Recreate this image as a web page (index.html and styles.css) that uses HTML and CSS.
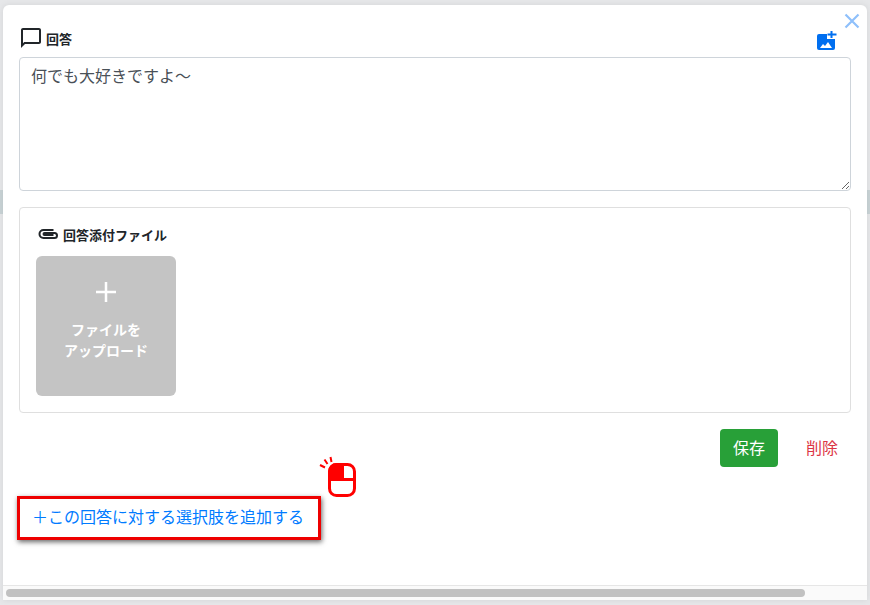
FILE: index.html
```html
<!DOCTYPE html>
<html lang="ja">
<head>
    <meta charset="UTF-8">
    <meta name="viewport" content="width=device-width, initial-scale=1.0">
    <title>回答</title>
    <link rel="stylesheet" href="styles.css">
</head>
<body>
    <div class="modal">
        <button type="button" class="close-button" aria-label="閉じる">
            <svg width="16" height="16" viewBox="0 0 16 16"><path d="M1.5 1.5l13 13M14.5 1.5l-13 13" fill="none" stroke="#8fc0fb" stroke-width="2.2"/></svg>
        </button>
        <div class="modal-body">
            <div class="answer-head">
                <div class="label-row">
                    <svg class="comment-icon" width="24" height="24" viewBox="0 0 24 24"><path d="M20 2H4c-1.1 0-2 .9-2 2v18l4-4h14c1.1 0 2-.9 2-2V4c0-1.1-.9-2-2-2zm0 14H5.2L4 17.2V4h16v12z" fill="#212529"/></svg>
                    <span class="label-text">回答</span>
                </div>
                <svg class="image-add-icon" width="24" height="24" viewBox="0 0 24 24">
                    <rect x="2" y="7" width="18" height="16" rx="2" fill="#006ff0"/>
                    <rect x="12" y="4" width="10" height="8" fill="#fff"/>
                    <path d="M16.500 4v7M12.500 7.500h9" stroke="#006ff0" stroke-width="2" fill="none"/>
                    <path d="M5 21l3-4 2 2 3-4 4 6z" fill="#fff"/>
                </svg>
            </div>
            <textarea class="answer-input">何でも大好きですよ〜</textarea>

            <div class="attach-card">
                <div class="label-row attach-label">
                    <svg width="24" height="24" viewBox="0 0 24 24"><path d="M17.500 8H7.500a4 4 0 0 0 0 8H18.500a2.500 2.500 0 0 0 0-5H8.500a1 1 0 0 0 0 2H17.500" fill="none" stroke="#212529" stroke-width="2"/></svg>
                    <span class="label-text">回答添付ファイル</span>
                </div>
                <div class="upload-tile">
                    <svg width="20" height="20" viewBox="0 0 20 20"><path d="M10 0v20M0 10h20" stroke="#fff" stroke-width="2.500"/></svg>
                    <div class="upload-text">ファイルを<br>アップロード</div>
                </div>
            </div>

            <div class="actions">
                <button type="button" class="save-button">保存</button>
                <button type="button" class="delete-button">削除</button>
            </div>

            <a class="add-choice" href="#">＋この回答に対する選択肢を追加する</a>
        </div>
        <div class="scroll-track"><div class="scroll-thumb"></div></div>

        <svg class="mouse-icon" width="38" height="42" viewBox="0 0 38 42">
            <path d="M1 10l5 2.500M5.500 4.500l3 4.500M11.500 2l1 5" stroke="#f00" stroke-width="2" fill="none"/>
            <rect x="10.500" y="9.500" width="25" height="31" rx="7" fill="#fff" stroke="#f00" stroke-width="3"/>
            <path d="M10.500 24.500v-8a7 7 0 0 1 7-7h6v15zM10.500 24.500h25" fill="#f00" stroke="#f00" stroke-width="3"/>
        </svg>
    </div>
</body>
</html>
```

FILE: styles.css
```css
html, body {
    height: 100%;
}
body {
    margin: 0;
    padding: 5px 3px;
    box-sizing: border-box;
    background: linear-gradient(#e6e7e9 190px, #c9d3d6 190px, #c9d3d6 214px, #e6e7e9 214px);
    font-family: "Liberation Sans", "Noto Sans CJK JP", sans-serif;
    color: #212529;
    overflow: hidden;
}
.modal {
    position: relative;
    height: 100%;
    display: flex;
    flex-direction: column;
    background: #fff;
    border-radius: 6px 6px 0 0;
    box-shadow: 0 0 6px rgba(0, 0, 0, 0.08);
}
.close-button {
    position: absolute;
    top: 8px;
    right: 7px;
    padding: 0;
    border: none;
    background: none;
    line-height: 0;
}
.modal-body {
    flex: 1;
    padding: 20px 16px 0 14px;
}
.answer-head {
    display: flex;
    justify-content: space-between;
    align-items: center;
    padding: 0 12px 6px 2px;
    height: 32px;
    box-sizing: border-box;
}
.label-row {
    display: flex;
    align-items: center;
    gap: 3px;
}
.label-text {
    font-size: 13px;
    font-weight: bold;
}
.image-add-icon {
    margin-top: 1px;
}
.answer-input {
    display: block;
    width: 832px;
    height: 134px;
    margin: 0 0 16px 2px;
    padding: 7px 11px;
    box-sizing: border-box;
    border: 1px solid #ced4da;
    border-radius: 4px;
    font-family: inherit;
    font-size: 16px;
    line-height: 24px;
    color: #495057;
}
.attach-card {
    width: 832px;
    height: 206px;
    margin-left: 2px;
    padding: 14px 16px 16px;
    box-sizing: border-box;
    border: 1px solid #dfdfdf;
    border-radius: 4px;
}
.attach-label {
    height: 24px;
    margin-bottom: 10px;
    gap: 3px;
}
.upload-tile {
    width: 140px;
    height: 140px;
    padding-top: 26px;
    box-sizing: border-box;
    display: flex;
    flex-direction: column;
    align-items: center;
    background: #c4c4c4;
    border-radius: 6px;
    color: #fff;
}
.upload-text {
    margin-top: 18px;
    font-size: 14px;
    font-weight: bold;
    line-height: 21px;
    text-align: center;
}
.actions {
    display: flex;
    justify-content: flex-end;
    gap: 15px;
    margin-top: 16px;
}
.actions button {
    height: 38px;
    border: none;
    border-radius: 4px;
    font-family: inherit;
    font-size: 16px;
}
.save-button {
    width: 58px;
    padding: 0 0 2px;
    background: #28a038;
    color: #fff;
}
.delete-button {
    width: 58px;
    padding: 0 13px 2px;
    background: none;
    color: #dc3545;
}
.add-choice {
    display: block;
    width: 304px;
    height: 44px;
    margin-top: 29px;
    padding-right: 2px;
    box-sizing: border-box;
    border: 3px solid #ee0000;
    box-shadow: 1px 2px 5px rgba(0, 0, 0, 0.6);
    font-size: 16px;
    line-height: 38px;
    text-align: center;
    color: #007bff;
    text-decoration: none;
}
.scroll-track {
    height: 15px;
    padding: 3px;
    box-sizing: border-box;
    border-top: 1px solid #e6e6e6;
    background: #fafafa;
}
.scroll-thumb {
    width: 799px;
    height: 8px;
    border-radius: 4px;
    background: #c1c1c1;
}
.mouse-icon {
    position: absolute;
    left: 316px;
    top: 450px;
}
```
